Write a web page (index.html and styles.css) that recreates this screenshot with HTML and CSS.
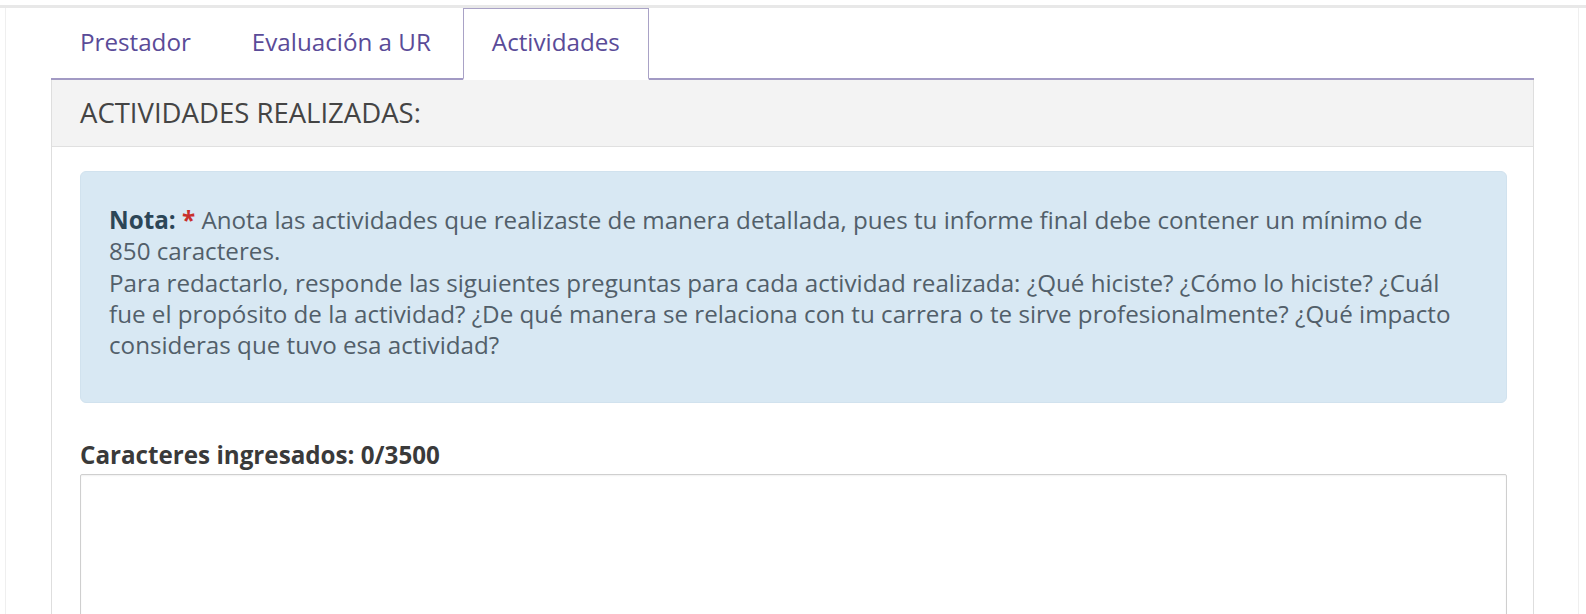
FILE: index.html
```html
<!DOCTYPE html>
<html lang="es">
<head>
<meta charset="utf-8">
<title>Actividades</title>
<link rel="stylesheet" href="styles.css">
</head>
<body>
<div class="topbar"></div>
<div class="page">
  <ul class="tabs">
    <li class="tab"><a href="#">Prestador</a></li>
    <li class="tab"><a href="#">Evaluación a UR</a></li>
    <li class="tab active"><a href="#">Actividades</a></li>
  </ul>
  <div class="panel">
    <div class="panel-heading">ACTIVIDADES REALIZADAS:</div>
    <div class="panel-body">
      <div class="alert">
        <p><strong>Nota:</strong> <span class="req">*</span> Anota las actividades que realizaste de manera detallada, pues tu informe final debe contener un mínimo de<br>850 caracteres.<br>Para redactarlo, responde las siguientes preguntas para cada actividad realizada: ¿Qué hiciste? ¿Cómo lo hiciste? ¿Cuál<br>fue el propósito de la actividad? ¿De qué manera se relaciona con tu carrera o te sirve profesionalmente? ¿Qué impacto<br>consideras que tuvo esa actividad?</p>
      </div>
      <label class="count" for="act">Caracteres ingresados: 0/3500</label>
      <textarea id="act" class="field"></textarea>
    </div>
  </div>
</div>
</body>
</html>
```

FILE: styles.css
```css
html, body {
  margin: 0;
  padding: 0;
  background: #ffffff;
  overflow: hidden;
}

body {
  font-family: "Open Sans", "Noto Sans", sans-serif;
  font-size: 24.2px;
  line-height: 31px;
  color: #333;
}

.topbar {
  height: 3px;
  margin-top: 5px;
  background: #e8e8e8;
}

.page {
  margin: 0 7px 0 5px;
  border-left: 1px solid #efefef;
  border-right: 1px solid #efefef;
  padding: 0 44px 0 45px;
  height: 640px;
}

.tabs {
  list-style: none;
  margin: 0;
  padding: 0;
  display: flex;
  border-bottom: 2px solid #a29ac4;
}

.tab {
  margin-right: 3px;
  margin-bottom: -2px;
}

.tab a {
  display: block;
  padding: 17px 28px 23px 28px;
  border: 1px solid transparent;
  border-bottom: none;
  color: #5a4b98;
  text-decoration: none;
  white-space: nowrap;
}

.tab.active a {
  background: #fff;
  border-color: #a9a2c6;
  border-bottom: 2px solid #fff;
  padding-bottom: 21px;
}

.panel {
  border-left: 1px solid #dedede;
  border-right: 1px solid #dedede;
}

.panel-heading {
  background: #f3f3f3;
  border-bottom: 1px solid #e0e0e0;
  padding: 15px 28px 15px 28px;
  font-size: 27.5px;
  line-height: 36px;
  color: #444;
}

.panel-body {
  padding: 24px 26px 0 28px;
  display: flex;
  flex-direction: column;
}

.alert {
  background: #d8e8f3;
  border: 1px solid #d1e2ee;
  border-radius: 6px;
  padding: 32px 20px 42px 28px;
  color: #525f6a;
  line-height: 31.3px;
}

.alert p {
  margin: 0;
  white-space: nowrap;
}

.alert strong {
  color: #2c4657;
  font-weight: 700;
}

.req {
  color: #c9302c;
  font-weight: 700;
}

.count {
  margin-top: 36px;
  font-weight: 700;
  color: #3a3a3a;
}

.field {
  margin-top: 4px;
  height: 200px;
  border: 1px solid #cfcfcf;
  border-radius: 2px;
  box-shadow: inset 0 1px 2px rgba(0,0,0,0.06);
  resize: none;
  font: inherit;
}
```
